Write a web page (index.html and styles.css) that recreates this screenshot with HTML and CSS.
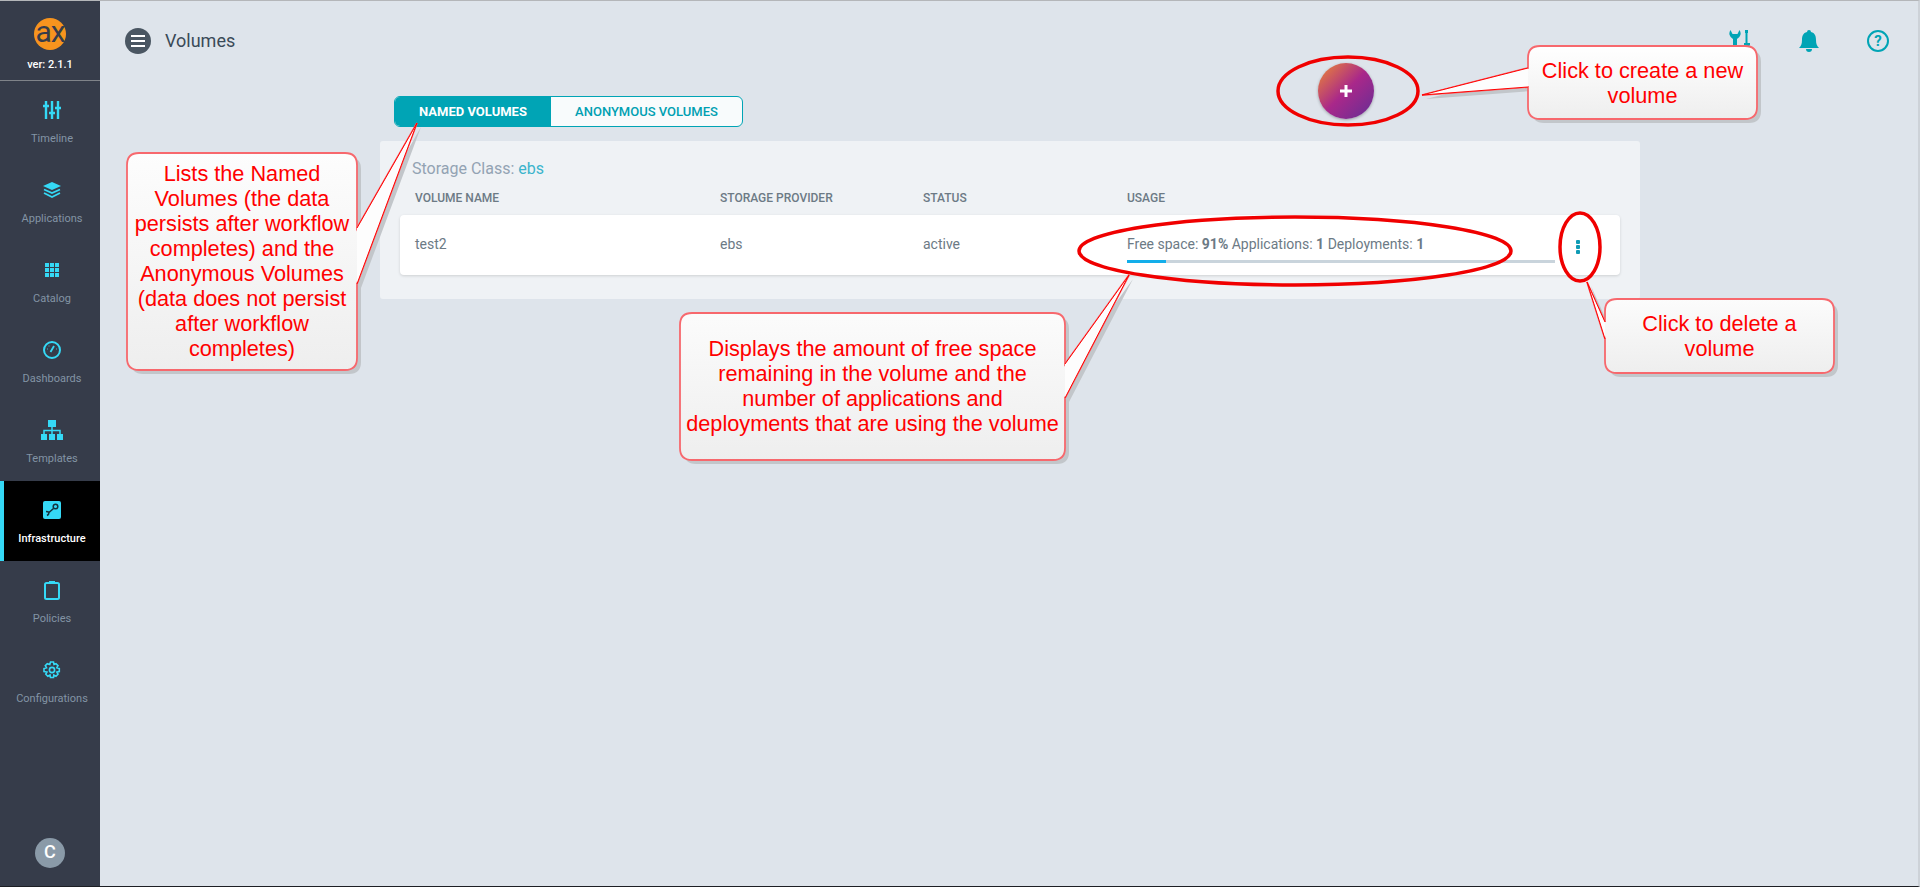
FILE: index.html
```html
<!DOCTYPE html>
<html>

<head>
    <title>Volumes</title>
    <meta charset="utf-8" />
    <link rel="stylesheet" href="styles.css">
</head>

<body>
    <div class="page">
        <div class="sidebar">
            <div class="brand">
                <div class="logo">ax</div>
                <div class="version">ver: 2.1.1</div>
            </div>
            <div class="nav-item">
                <svg class="nav-icon" viewBox="0 0 20 20"><path d="M4 1v18M10 1v18M16 1v18" stroke-width="2.4" /><path d="M1 6h6M7 13h6M13 8h6" stroke-width="2.6" /></svg>
                <span>Timeline</span>
            </div>
            <div class="nav-item">
                <svg class="nav-icon" viewBox="0 0 20 20"><path class="fill" d="M10 2l9 4-9 4-9-4z" /><path d="M2 9.500l8 3.600 8-3.600M2 13l8 4 8-4" stroke-width="1.800" /></svg>
                <span>Applications</span>
            </div>
            <div class="nav-item">
                <svg class="nav-icon" viewBox="0 0 20 20"><path class="fill" d="M3 3h4v4H3zM8 3h4v4H8zM13 3h4v4h-4zM3 8h4v4H3zM8 8h4v4H8zM13 8h4v4h-4zM3 13h4v4H3zM8 13h4v4H8zM13 13h4v4h-4z" /></svg>
                <span>Catalog</span>
            </div>
            <div class="nav-item">
                <svg class="nav-icon" viewBox="0 0 20 20"><circle cx="10" cy="10" r="8" stroke-width="2" /><path d="M8.500 12l3.500-6" stroke-width="1.800" /><path d="M5 9h.8M6.600 6h.8M15 9h-.8" stroke-width="1.200" /></svg>
                <span>Dashboards</span>
            </div>
            <div class="nav-item">
                <svg class="nav-icon nav-icon-wide" viewBox="0 0 22 20"><path class="fill" d="M7 0h8v7H7zM0 14h6v6H0zM8 14h6v6H8zM16 14h6v6h-6z" /><path d="M11 7v7M3 14v-3.500h16V14" stroke-width="1.500" /></svg>
                <span>Templates</span>
            </div>
            <div class="nav-item active">
                <svg class="nav-icon" viewBox="0 0 20 20"><rect class="fill" x="1" y="1" width="18" height="18" rx="2" /><circle class="dark" cx="13.500" cy="6.500" r="2.300" stroke-width="1.500" /><path class="dark" d="M11.500 8.500L7 12.500M4 11.500c2 0 3 1 3 1s0 2-2 3" stroke-width="1.500" /></svg>
                <span>Infrastructure</span>
            </div>
            <div class="nav-item">
                <svg class="nav-icon" viewBox="0 0 20 20"><rect x="3" y="3" width="14" height="16" rx="1.500" stroke-width="2" /><path class="fill" d="M7 1h6v3H7z" /></svg>
                <span>Policies</span>
            </div>
            <div class="nav-item">
                <svg class="nav-icon" viewBox="0 0 20 20"><path d="M8.500 2h3l.5 2.500 2-.8 2 2-1.200 2 2.500.8v3l-2.500.5 1.200 2.200-2 2-2.200-1.200-.3 2.500h-3l-.5-2.500-2.200 1.200-2-2 1.200-2.200L2 11.500v-3l2.500-.8-1.200-2 2-2 2.500.8z" stroke-width="1.600" /><circle cx="10" cy="10" r="2.600" stroke-width="1.600" /></svg>
                <span>Configurations</span>
            </div>
            <div class="avatar">C</div>
        </div>

        <div class="main">
            <div class="header">
                <div class="menu-btn"><i></i><i></i><i></i></div>
                <div class="title">Volumes</div>
                <div class="header-icons">
                    <svg class="head-icon" viewBox="0 0 22 22"><path class="head-fill" d="M1.500 0a6 6 0 0 0 2.500 9V22h4V9a6 6 0 0 0 2.500-9L8.500 4H3.500zM16 0h3v3h-.5v10H21v2l-1.500 2v3h-3v-3L15 15v-2h1.500V3H16z" /></svg>
                    <svg class="head-icon" viewBox="0 0 22 22"><path class="head-fill" d="M11 0a2 2 0 0 1 2 2c4 1 5 4 5 8 0 4 1 6 3 8H1c2-2 3-4 3-8 0-4 1-7 5-8a2 2 0 0 1 2-2zM8 19h6a3 3 0 0 1-6 0z" /></svg>
                    <svg class="head-icon" viewBox="0 0 22 22"><circle class="head-line" cx="11" cy="11" r="10" /><text class="help-mark" x="11" y="16">?</text></svg>
                </div>
            </div>

            <div class="tabs">
                <div class="tab tab-on">NAMED VOLUMES</div>
                <div class="tab">ANONYMOUS VOLUMES</div>
            </div>

            <div class="panel">
                <div class="storage">Storage Class: <span>ebs</span></div>
                <div class="cols cols-head">
                    <div>VOLUME NAME</div>
                    <div>STORAGE PROVIDER</div>
                    <div>STATUS</div>
                    <div>USAGE</div>
                </div>
                <div class="cols row">
                    <div>test2</div>
                    <div>ebs</div>
                    <div>active</div>
                    <div class="usage">
                        <div>Free space: <b>91%</b> Applications: <b>1</b> Deployments: <b>1</b></div>
                        <div class="bar"><div class="bar-used"></div></div>
                    </div>
                    <div class="kebab"><i></i><i></i><i></i></div>
                </div>
            </div>

            <div class="fab">
                <svg viewBox="0 0 14 14"><path d="M7 1v12M1 7h12" /></svg>
            </div>
        </div>

        <svg class="marks" width="1920" height="887" viewBox="0 0 1920 887">
            <defs>
                <linearGradient id="bubble" x1="0" y1="0" x2="0" y2="1">
                    <stop offset="0" stop-color="#ffffff" />
                    <stop offset="1" stop-color="#eeeeee" />
                </linearGradient>
                <path id="c1" d="M139 153H345Q357 153 357 165V228L417 123L357 284V358Q357 370 345 370H139Q127 370 127 358V165Q127 153 139 153Z" />
                <path id="c2" d="M1540 46H1745Q1757 46 1757 58V107Q1757 119 1745 119H1540Q1528 119 1528 107V87L1422 95L1528 68V58Q1528 46 1540 46Z" />
                <path id="c3" d="M692 313H1053Q1065 313 1065 325V364L1129 275L1065 398V448Q1065 460 1053 460H692Q680 460 680 448V325Q680 313 692 313Z" />
                <path id="c4" d="M1617 299H1822Q1834 299 1834 311V361Q1834 373 1822 373H1617Q1605 373 1605 361V339L1587 282L1605 322V311Q1605 299 1617 299Z" />
            </defs>
            <g class="bubble-shadow" transform="translate(4 4)">
                <use href="#c1" /><use href="#c2" /><use href="#c3" /><use href="#c4" />
            </g>
            <g class="bubble-body">
                <use href="#c1" /><use href="#c2" /><use href="#c3" /><use href="#c4" />
            </g>
            <g class="pointer">
                <path d="M357 228L417 123L357 284" />
                <path d="M1528 87L1422 95L1528 68" />
                <path d="M1065 364L1129 275L1065 398" />
                <path d="M1605 339L1587 282L1605 322" />
            </g>
            <g class="ring">
                <ellipse cx="1348" cy="91" rx="70" ry="34" />
                <ellipse cx="1295" cy="251" rx="216" ry="34" />
                <ellipse cx="1580" cy="247" rx="20" ry="34" />
            </g>
        </svg>

        <div class="note note-lists">Lists the Named<br>Volumes (the data<br>persists after workflow<br>completes) and the<br>Anonymous Volumes<br>(data does not persist<br>after workflow<br>completes)</div>
        <div class="note note-create">Click to create a new<br>volume</div>
        <div class="note note-space">Displays the amount of free space<br>remaining in the volume and the<br>number of applications and<br>deployments that are using the volume</div>
        <div class="note note-delete">Click to delete a<br>volume</div>
    </div>
</body>

</html>
```

FILE: styles.css
```css
html,
body {
    width: 100%;
    height: 100%;
    margin: 0;
}

body {
    font-family: Roboto, "Liberation Sans", sans-serif;
    overflow: hidden;
}

.page {
    position: relative;
    display: flex;
    width: 1920px;
    height: 887px;
    overflow: hidden;
    background-color: #dee4eb;
    border-top: 1px solid #b4b6b9;
    border-right: 2px solid #cdd2d8;
    border-bottom: 1px solid #1d1f24;
    box-sizing: border-box;
}

/* sidebar */
.sidebar {
    width: 100px;
    flex-shrink: 0;
    display: flex;
    flex-direction: column;
    background-color: #363c4a;
}

.brand {
    height: 79px;
    display: flex;
    flex-direction: column;
    align-items: center;
    border-bottom: 1px solid #7f8389;
}

.logo {
    width: 32px;
    height: 32px;
    margin-top: 17px;
    border-radius: 50%;
    background-color: #f7941e;
    color: #363c4a;
    font-size: 30px;
    line-height: 27px;
    text-align: center;
    letter-spacing: -1px;
}

.version {
    margin-top: 8px;
    font-size: 11px;
    font-weight: 500;
    line-height: 14px;
    color: #fff;
}

.nav-item {
    height: 80px;
    box-sizing: border-box;
    display: flex;
    flex-direction: column;
    align-items: center;
    padding: 19px 0 0 4px;
    font-size: 11px;
    line-height: 14px;
    color: #8394a5;
}

.nav-item span {
    margin-top: 12px;
}

.nav-item.active {
    background-color: #000;
    border-left: 4px solid #35d9f6;
    padding-left: 0;
    color: #fff;
    font-weight: 500;
}

.nav-icon {
    width: 20px;
    height: 20px;
    fill: none;
    stroke: #35d9f6;
}

.nav-icon-wide {
    width: 22px;
}

.nav-icon .fill {
    fill: #35d9f6;
    stroke: none;
}

.nav-icon .dark {
    fill: none;
    stroke: #14323c;
}

.avatar {
    width: 30px;
    height: 30px;
    margin: auto auto 18px;
    border-radius: 50%;
    background-color: #8a9aa8;
    color: #fff;
    font-size: 18px;
    font-weight: 500;
    line-height: 28px;
    text-align: center;
}

/* main */
.main {
    flex: 1;
    position: relative;
}

.header {
    height: 80px;
    display: flex;
    align-items: center;
    padding: 0 29px 0 25px;
}

.menu-btn {
    width: 26px;
    height: 26px;
    border-radius: 50%;
    background-color: #4a5662;
    display: flex;
    flex-direction: column;
    align-items: center;
    justify-content: center;
    gap: 3px;
}

.menu-btn i {
    width: 14px;
    height: 2px;
    background-color: #fff;
}

.title {
    margin: 0 0 2px 14px;
    font-size: 18px;
    color: #3a4a58;
}

.header-icons {
    margin-left: auto;
    display: flex;
    gap: 47px;
}

.head-icon {
    width: 22px;
    height: 22px;
}

.head-fill {
    fill: #00a4b5;
}

.head-line {
    fill: none;
    stroke: #00a4b5;
    stroke-width: 2;
}

.help-mark {
    fill: #00a4b5;
    font-size: 15px;
    font-weight: 700;
    text-anchor: middle;
}

.tabs {
    display: flex;
    width: 349px;
    height: 31px;
    margin: 15px 0 0 294px;
    box-sizing: border-box;
    border: 1px solid #00a4b5;
    border-radius: 6px;
    overflow: hidden;
    background-color: #f8fbfc;
    color: #00a0b2;
    font-size: 13px;
    font-weight: 500;
}

.tab {
    flex: 1;
    line-height: 29px;
    text-align: center;
}

.tab-on {
    flex: none;
    width: 156px;
    background-color: #00a4b5;
    color: #fff;
    font-weight: 700;
}

.panel {
    width: 1260px;
    height: 158px;
    box-sizing: border-box;
    margin: 14px 0 0 280px;
    padding: 19px 20px 0;
    border-radius: 3px;
    background-color: #eff2f5;
}

.storage {
    margin-left: 12px;
    font-size: 16px;
    line-height: 18px;
    color: #93a3b3;
}

.storage span {
    color: #3bb4cc;
}

.cols {
    display: grid;
    grid-template-columns: 305px 203px 204px 428px 1fr;
    padding-left: 15px;
    color: #6c7a85;
}

.cols-head {
    margin-top: 11px;
    font-size: 12px;
    font-weight: 500;
    line-height: 18px;
}

.row {
    height: 60px;
    box-sizing: border-box;
    margin-top: 8px;
    padding-bottom: 2px;
    align-items: center;
    border-radius: 4px;
    background-color: #fff;
    box-shadow: 0 1px 3px rgba(0, 0, 0, 0.14);
    font-size: 14px;
}

.usage {
    margin-top: 10px;
}

.bar {
    height: 3px;
    margin-top: 8px;
    background-color: #c9d4dc;
}

.bar-used {
    width: 39px;
    height: 3px;
    background-color: #13aeea;
}

.kebab {
    margin: 6px 0 0 21px;
    display: flex;
    flex-direction: column;
    gap: 1px;
}

.kebab i {
    width: 4px;
    height: 4px;
    border-radius: 1px;
    background-color: #0f9bb5;
}

.fab {
    position: absolute;
    left: 1218px;
    top: 62px;
    width: 56px;
    height: 56px;
    border-radius: 50%;
    background: linear-gradient(135deg, #e8813a 5%, #a9288a 50%, #6a2d94 95%);
    box-shadow: 0 1px 3px rgba(0, 0, 0, 0.3);
    display: flex;
    align-items: center;
    justify-content: center;
}

.fab svg {
    width: 14px;
    height: 14px;
    fill: none;
    stroke: #fff;
    stroke-width: 3;
}

/* annotations */
.marks {
    position: absolute;
    left: 0;
    top: -1px;
}

.bubble-shadow {
    fill: #c2c6ca;
}

.bubble-body {
    fill: url(#bubble);
    stroke: #f7686d;
    stroke-width: 1.800;
}

.pointer {
    fill: #fdfdfd;
    stroke: #f00;
    stroke-width: 1;
}

.ring {
    fill: none;
    stroke: #f00000;
    stroke-width: 3.500;
}

.note {
    position: absolute;
    display: flex;
    align-items: center;
    justify-content: center;
    text-align: center;
    font-family: "Liberation Sans", Arial, sans-serif;
    font-size: 21.700px;
    line-height: 25px;
    color: #f00;
}

.note-lists {
    left: 127px;
    top: 151px;
    width: 230px;
    height: 217px;
}

.note-create {
    left: 1528px;
    top: 45px;
    width: 229px;
    height: 73px;
}

.note-space {
    left: 680px;
    top: 311px;
    width: 385px;
    height: 147px;
}

.note-delete {
    left: 1605px;
    top: 298px;
    width: 229px;
    height: 74px;
}
```
